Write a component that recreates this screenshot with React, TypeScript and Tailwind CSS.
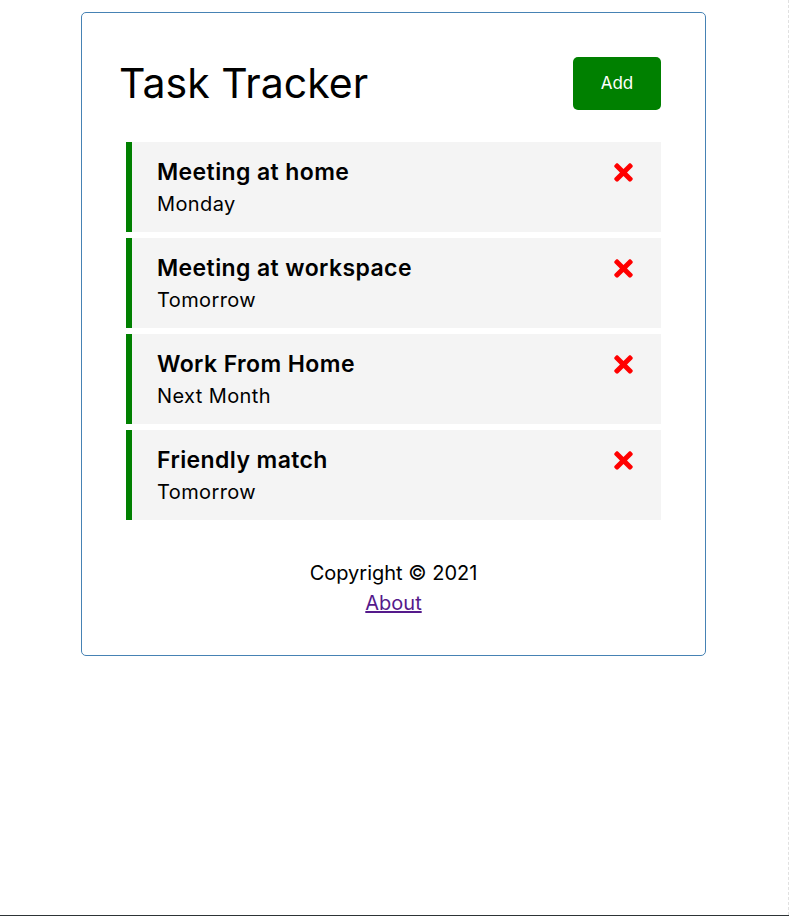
import React from 'react';
import { FaTimes } from 'react-icons/fa';

interface Task {
  id: number;
  text: string;
  day: string;
}

const tasks: Task[] = [
  { id: 1, text: 'Meeting at home', day: 'Monday' },
  { id: 2, text: 'Meeting at workspace', day: 'Tomorrow' },
  { id: 3, text: 'Work From Home', day: 'Next Month' },
  { id: 4, text: 'Friendly match', day: 'Tomorrow' },
];

const TaskItem: React.FC<{ task: Task }> = ({ task }) => (
  <div className="h-[90px] mx-[5px] bg-[#f4f4f4] border-l-[6px] border-[#008000] pl-[25px] pr-[24px] pt-[14px] cursor-pointer">
    <h3 className="flex items-center justify-between text-[23px] font-semibold tracking-[0.4px] leading-[32px] text-black">
      {task.text}
      <FaTimes size={27} className="text-[#ff0000]" />
    </h3>
    <p className="text-[20px] tracking-[0.4px] leading-[32px] text-black">{task.day}</p>
  </div>
);

export default function App() {
  return (
    <div className="h-[916px] bg-white border-b border-[#2d3436]" style={{ fontFamily: 'Inter, "Open Sans", sans-serif' }}>
      <div className="h-full border-r border-dashed border-[#e0e0e0] pt-[12px]">
        <div className="ml-[81px] w-[625px] border border-[#4682b4] rounded-[5px] px-[39px] pt-[39px] pb-[37px]">
          <header className="flex items-center justify-between mb-[27px]">
            <h1 className="text-[41px] font-normal leading-none text-black -ml-[2px]">Task Tracker</h1>
            <button className="m-[5px] w-[88px] h-[53px] bg-[#008000] text-white text-[17px] rounded-[5px]">
              Add
            </button>
          </header>

          <div className="flex flex-col gap-[6px]">
            {tasks.map((t) => (
              <TaskItem key={t.id} task={t} />
            ))}
          </div>

          <footer className="mt-[38px] text-center text-[20px] leading-[30px] text-black">
            <p>Copyright &copy; 2021</p>
            <a href="#" className="underline text-[#551a8b]">About</a>
          </footer>
        </div>
      </div>
    </div>
  );
}
